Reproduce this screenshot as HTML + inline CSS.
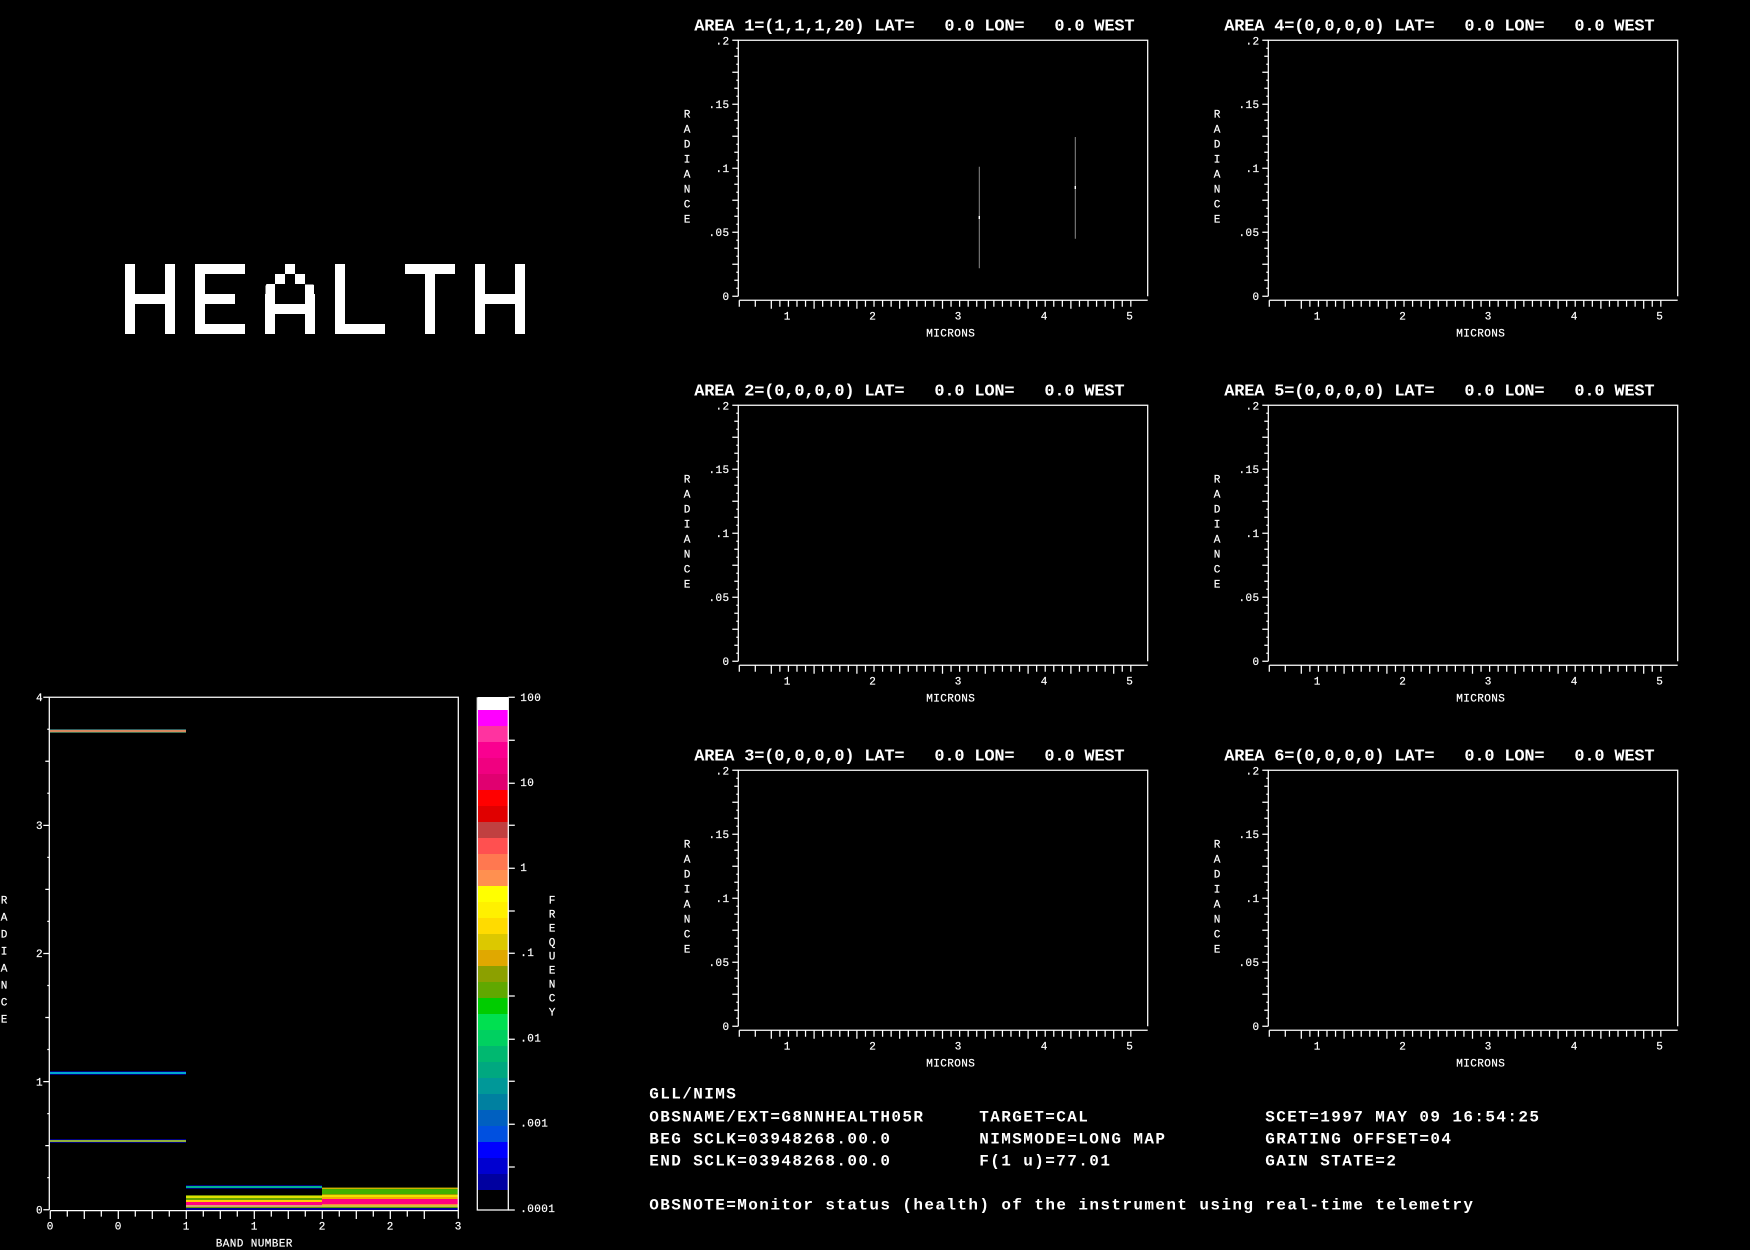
<!DOCTYPE html>
<html lang="en">
<head>
<meta charset="utf-8">
<title>NIMS HEALTH</title>
<style>
html,body{margin:0;padding:0;background:#000;width:1750px;height:1250px;overflow:hidden}
svg{display:block}
text{fill:#fff;font-family:"Liberation Mono",monospace;white-space:pre}
.t{font-size:17px;font-weight:bold;letter-spacing:-.2px}
.b{font-size:16px;font-weight:bold;letter-spacing:1.4px}
.s{font-size:11px;letter-spacing:.4px;stroke:#fff;stroke-width:.2px}
.e{text-anchor:end}
.m{text-anchor:middle}
.big{font-family:"Liberation Sans",sans-serif;font-size:100px}
.l{stroke:#fff;stroke-width:1.25;fill:none}
</style>
</head>
<body>
<svg xmlns="http://www.w3.org/2000/svg" width="1750" height="1250" viewBox="0 0 1750 1250">
<defs>
<g id="pf">
<path class="l" d="M738.3 296.3V40.3H1147.7V296.3"/>
<path class="l" transform="translate(738.3 40.3)" d="M0 0h-6m6 8h-2m2 8h-4m4 8h-2m2 8h-6m6 8h-2m2 8h-4m4 8h-2m2 8h-6m6 8h-2m2 8h-4m4 8h-2m2 8h-6m6 8h-2m2 8h-4m4 8h-2m2 8h-6m6 8h-2m2 8h-4m4 8h-2m2 8h-6m6 8h-2m2 8h-4m4 8h-2m2 8h-6m6 8h-2m2 8h-4m4 8h-2m2 8h-6m6 8h-2m2 8h-4m4 8h-2m2 8h-6"/>
<path class="l" transform="translate(738.3 40.3)" d="M1 260H409.4M1 260v6.5m16-6.5v6.5m16-6.5v8.5m8.56-8.5v6.5m8.56-6.5v6.5m8.56-6.5v6.5m8.56-6.5v6.5m8.56-6.5v8.5m8.56-8.5v6.5m8.56-6.5v6.5m8.56-6.5v6.5m8.56-6.5v6.5m8.56-6.5v8.5m8.56-8.5v6.5m8.56-6.5v6.5m8.56-6.5v6.5m8.56-6.5v6.5m8.56-6.5v8.5m8.56-8.5v6.5m8.56-6.5v6.5m8.56-6.5v6.5m8.56-6.5v6.5m8.56-6.5v8.5m8.56-8.5v6.5m8.56-6.5v6.5m8.56-6.5v6.5m8.56-6.5v6.5m8.56-6.5v8.5m8.56-8.5v6.5m8.56-6.5v6.5m8.56-6.5v6.5m8.56-6.5v6.5m8.56-6.5v8.5m8.56-8.5v6.5m8.56-6.5v6.5m8.56-6.5v6.5m8.56-6.5v6.5m8.56-6.5v8.5m8.56-8.5v6.5m8.56-6.5v6.5m8.56-6.5v6.5m8.56-6.5v6.5m8.56-6.5v8.5m8.56-8.5v6.5m8.56-6.5v6.5"/>
</g>
<filter id="pix" filterUnits="userSpaceOnUse" x="125" y="264" width="400" height="70" color-interpolation-filters="sRGB">
<feFlood x="129" y="268" width="2" height="2" flood-color="#fff"/>
<feComposite x="125" y="264" width="10" height="10"/>
<feTile x="125" y="264" width="400" height="70" result="grid"/>
<feComposite in="SourceGraphic" in2="grid" operator="in"/>
<feComponentTransfer><feFuncA type="discrete" tableValues="0 1"/></feComponentTransfer>
<feMorphology operator="dilate" radius="4"/>
</filter>
<clipPath id="atop">
<rect x="285" y="264" width="10" height="10"/>
<rect x="275" y="274" width="10" height="10"/><rect x="295" y="274" width="10" height="10"/>
<rect x="265" y="284" width="10" height="10"/><rect x="305" y="284" width="10" height="10"/>
</clipPath>
<clipPath id="abot">
<rect x="265" y="294" width="10" height="40"/><rect x="305" y="294" width="10" height="40"/>
<rect x="265" y="304" width="50" height="10"/>
</clipPath>
</defs>

<rect width="1750" height="1250" fill="#000"/>

<!-- HEALTH -->
<g filter="url(#pix)">
<text class="big" transform="translate(118.96 334) scale(.8595 1.0175)">H</text>
<text class="big" transform="translate(188.85 334) scale(.868 1.0175)">E</text>
<g clip-path="url(#atop)"><text class="big" transform="translate(255.65 311.9) scale(1.024 .682)">A</text></g>
<g clip-path="url(#abot)"><text class="big" transform="translate(255.65 357.6) scale(1.024 2.048)">A</text></g>
<text class="big" transform="translate(325.27 334) scale(1.147 1.0175)">L</text>
<text class="big" transform="translate(405 334) scale(.819 1.0175)">T</text>
<text class="big" transform="translate(468.96 334) scale(.8595 1.0175)">H</text>
</g>

<!-- Panel 1 -->
<g>
<text class="t" x="694.3" y="30.5">AREA 1=(1,1,1,20) LAT=   0.0 LON=   0.0 WEST</text>
<use href="#pf"/>
<text class="s e" x="729.5" y="44.3">.2</text><text class="s e" x="729.5" y="108">.15</text><text class="s e" x="729.5" y="172.2">.1</text><text class="s e" x="729.5" y="236">.05</text><text class="s e" x="729.5" y="300">0</text>
<text class="s m" x="787.3" y="319.5">1</text><text class="s m" x="872.7" y="319.5">2</text><text class="s m" x="958.3" y="319.5">3</text><text class="s m" x="1044.3" y="319.5">4</text><text class="s m" x="1129.7" y="319.5">5</text>
<text class="s m" x="950.7" y="336.5">MICRONS</text>
<text class="s m" x="687.3" y="117.3">R</text><text class="s m" x="687.3" y="132.3">A</text><text class="s m" x="687.3" y="147.3">D</text><text class="s m" x="687.3" y="162.3">I</text><text class="s m" x="687.3" y="177.3">A</text><text class="s m" x="687.3" y="192.3">N</text><text class="s m" x="687.3" y="207.3">C</text><text class="s m" x="687.3" y="222.3">E</text>
<path d="M979.3 166.7V268.3M1075.3 137V238.7" stroke="#8a8a8a" stroke-width="1" fill="none"/>
<path d="M979.3 216V219M1075.3 186V189" stroke="#fff" stroke-width="1.4" fill="none"/>
</g>

<!-- Panel 2 -->
<g transform="translate(0 365)">
<text class="t" x="694.3" y="30.5">AREA 2=(0,0,0,0) LAT=   0.0 LON=   0.0 WEST</text>
<use href="#pf"/>
<text class="s e" x="729.5" y="44.3">.2</text><text class="s e" x="729.5" y="108">.15</text><text class="s e" x="729.5" y="172.2">.1</text><text class="s e" x="729.5" y="236">.05</text><text class="s e" x="729.5" y="300">0</text>
<text class="s m" x="787.3" y="319.5">1</text><text class="s m" x="872.7" y="319.5">2</text><text class="s m" x="958.3" y="319.5">3</text><text class="s m" x="1044.3" y="319.5">4</text><text class="s m" x="1129.7" y="319.5">5</text>
<text class="s m" x="950.7" y="336.5">MICRONS</text>
<text class="s m" x="687.3" y="117.3">R</text><text class="s m" x="687.3" y="132.3">A</text><text class="s m" x="687.3" y="147.3">D</text><text class="s m" x="687.3" y="162.3">I</text><text class="s m" x="687.3" y="177.3">A</text><text class="s m" x="687.3" y="192.3">N</text><text class="s m" x="687.3" y="207.3">C</text><text class="s m" x="687.3" y="222.3">E</text>
</g>

<!-- Panel 3 -->
<g transform="translate(0 730)">
<text class="t" x="694.3" y="30.5">AREA 3=(0,0,0,0) LAT=   0.0 LON=   0.0 WEST</text>
<use href="#pf"/>
<text class="s e" x="729.5" y="44.3">.2</text><text class="s e" x="729.5" y="108">.15</text><text class="s e" x="729.5" y="172.2">.1</text><text class="s e" x="729.5" y="236">.05</text><text class="s e" x="729.5" y="300">0</text>
<text class="s m" x="787.3" y="319.5">1</text><text class="s m" x="872.7" y="319.5">2</text><text class="s m" x="958.3" y="319.5">3</text><text class="s m" x="1044.3" y="319.5">4</text><text class="s m" x="1129.7" y="319.5">5</text>
<text class="s m" x="950.7" y="336.5">MICRONS</text>
<text class="s m" x="687.3" y="117.3">R</text><text class="s m" x="687.3" y="132.3">A</text><text class="s m" x="687.3" y="147.3">D</text><text class="s m" x="687.3" y="162.3">I</text><text class="s m" x="687.3" y="177.3">A</text><text class="s m" x="687.3" y="192.3">N</text><text class="s m" x="687.3" y="207.3">C</text><text class="s m" x="687.3" y="222.3">E</text>
</g>

<!-- Panel 4 -->
<g transform="translate(530 0)">
<text class="t" x="694.3" y="30.5">AREA 4=(0,0,0,0) LAT=   0.0 LON=   0.0 WEST</text>
<use href="#pf"/>
<text class="s e" x="729.5" y="44.3">.2</text><text class="s e" x="729.5" y="108">.15</text><text class="s e" x="729.5" y="172.2">.1</text><text class="s e" x="729.5" y="236">.05</text><text class="s e" x="729.5" y="300">0</text>
<text class="s m" x="787.3" y="319.5">1</text><text class="s m" x="872.7" y="319.5">2</text><text class="s m" x="958.3" y="319.5">3</text><text class="s m" x="1044.3" y="319.5">4</text><text class="s m" x="1129.7" y="319.5">5</text>
<text class="s m" x="950.7" y="336.5">MICRONS</text>
<text class="s m" x="687.3" y="117.3">R</text><text class="s m" x="687.3" y="132.3">A</text><text class="s m" x="687.3" y="147.3">D</text><text class="s m" x="687.3" y="162.3">I</text><text class="s m" x="687.3" y="177.3">A</text><text class="s m" x="687.3" y="192.3">N</text><text class="s m" x="687.3" y="207.3">C</text><text class="s m" x="687.3" y="222.3">E</text>
</g>

<!-- Panel 5 -->
<g transform="translate(530 365)">
<text class="t" x="694.3" y="30.5">AREA 5=(0,0,0,0) LAT=   0.0 LON=   0.0 WEST</text>
<use href="#pf"/>
<text class="s e" x="729.5" y="44.3">.2</text><text class="s e" x="729.5" y="108">.15</text><text class="s e" x="729.5" y="172.2">.1</text><text class="s e" x="729.5" y="236">.05</text><text class="s e" x="729.5" y="300">0</text>
<text class="s m" x="787.3" y="319.5">1</text><text class="s m" x="872.7" y="319.5">2</text><text class="s m" x="958.3" y="319.5">3</text><text class="s m" x="1044.3" y="319.5">4</text><text class="s m" x="1129.7" y="319.5">5</text>
<text class="s m" x="950.7" y="336.5">MICRONS</text>
<text class="s m" x="687.3" y="117.3">R</text><text class="s m" x="687.3" y="132.3">A</text><text class="s m" x="687.3" y="147.3">D</text><text class="s m" x="687.3" y="162.3">I</text><text class="s m" x="687.3" y="177.3">A</text><text class="s m" x="687.3" y="192.3">N</text><text class="s m" x="687.3" y="207.3">C</text><text class="s m" x="687.3" y="222.3">E</text>
</g>

<!-- Panel 6 -->
<g transform="translate(530 730)">
<text class="t" x="694.3" y="30.5">AREA 6=(0,0,0,0) LAT=   0.0 LON=   0.0 WEST</text>
<use href="#pf"/>
<text class="s e" x="729.5" y="44.3">.2</text><text class="s e" x="729.5" y="108">.15</text><text class="s e" x="729.5" y="172.2">.1</text><text class="s e" x="729.5" y="236">.05</text><text class="s e" x="729.5" y="300">0</text>
<text class="s m" x="787.3" y="319.5">1</text><text class="s m" x="872.7" y="319.5">2</text><text class="s m" x="958.3" y="319.5">3</text><text class="s m" x="1044.3" y="319.5">4</text><text class="s m" x="1129.7" y="319.5">5</text>
<text class="s m" x="950.7" y="336.5">MICRONS</text>
<text class="s m" x="687.3" y="117.3">R</text><text class="s m" x="687.3" y="132.3">A</text><text class="s m" x="687.3" y="147.3">D</text><text class="s m" x="687.3" y="162.3">I</text><text class="s m" x="687.3" y="177.3">A</text><text class="s m" x="687.3" y="192.3">N</text><text class="s m" x="687.3" y="207.3">C</text><text class="s m" x="687.3" y="222.3">E</text>
</g>

<!-- Left 2D histogram: coloured strips -->
<g shape-rendering="crispEdges">
<rect x="50" y="729" width="136" height="1" fill="#306060"/>
<rect x="50" y="730" width="136" height="2" fill="#d88a60"/>
<rect x="50" y="732" width="136" height="1" fill="#407050"/>
<rect x="50" y="1071" width="136" height="4" fill="#000080"/>
<rect x="50" y="1072" width="136" height="2" fill="#00a8d0"/>
<rect x="50" y="1139" width="136" height="4" fill="#000080"/>
<rect x="50" y="1140" width="136" height="2" fill="#90b040"/>
<rect x="186" y="1185" width="136" height="4" fill="#000080"/>
<rect x="186" y="1186" width="136" height="2" fill="#00b090"/>
<rect x="186" y="1195" width="136" height="1" fill="#6a8a00"/>
<rect x="186" y="1196" width="136" height="2" fill="#e0e000"/>
<rect x="186" y="1198" width="136" height="2" fill="#60a000"/>
<rect x="186" y="1200" width="136" height="2" fill="#ffd000"/>
<rect x="186" y="1202" width="136" height="3" fill="#ff0080"/>
<rect x="186" y="1205" width="136" height="2" fill="#d8a070"/>
<rect x="186" y="1207" width="136" height="1" fill="#60a000"/>
<rect x="186" y="1208" width="136" height="2" fill="#000090"/>
<rect x="322" y="1187" width="136" height="1" fill="#505000"/>
<rect x="322" y="1188" width="136" height="1" fill="#d0b000"/>
<rect x="322" y="1189" width="136" height="5" fill="#40b000"/>
<rect x="322" y="1194" width="136" height="1" fill="#a0a000"/>
<rect x="322" y="1195" width="136" height="2" fill="#f0e000"/>
<rect x="322" y="1197" width="136" height="2" fill="#f0b000"/>
<rect x="322" y="1199" width="136" height="5" fill="#ff0080"/>
<rect x="322" y="1204" width="136" height="1" fill="#ff8040"/>
<rect x="322" y="1205" width="136" height="2" fill="#d0c040"/>
<rect x="322" y="1207" width="136" height="1" fill="#50a000"/>
<rect x="322" y="1208" width="136" height="2" fill="#000090"/>
</g>

<!-- Left plot axes -->
<path class="l" d="M49.3 1209.7V697.3H458.3V1218.7"/>
<path class="l" transform="translate(49.3 697.3)" d="M0 0h-6m6 32h-2m2 32h-4m4 32h-2m2 32.1h-6m6 32h-2m2 32h-4m4 32h-2m2 32.1h-6m6 32h-2m2 32h-4m4 32h-2m2 32.1h-6m6 32h-2m2 32h-4m4 32h-2m2 32.1h-6"/>
<path class="l" transform="translate(50.3 1210.6)" d="M0 0H408M0 0v8.4m17-8.4v6m17-6v8.4m17-8.4v6m17-6v8.4m17-8.4v6m17-6v8.4m17-8.4v6m17-6v8.4m17-8.4v6m17-6v8.4m17-8.4v6m17-6v8.4m17-8.4v6m17-6v8.4m17-8.4v6m17-6v8.4m17-8.4v6m17-6v8.4m17-8.4v6m17-6v8.4m17-8.4v6m17-6v8.4"/>
<text class="s e" x="43" y="701">4</text><text class="s e" x="43" y="829">3</text><text class="s e" x="43" y="957">2</text><text class="s e" x="43" y="1085.3">1</text><text class="s e" x="43" y="1213.3">0</text>
<text class="s m" x="50.3" y="1229.5">0</text><text class="s m" x="118.3" y="1229.5">0</text><text class="s m" x="186.3" y="1229.5">1</text><text class="s m" x="254.3" y="1229.5">1</text><text class="s m" x="322.3" y="1229.5">2</text><text class="s m" x="390.3" y="1229.5">2</text><text class="s m" x="458.3" y="1229.5">3</text>
<text class="s m" x="254.3" y="1246.5">BAND NUMBER</text>
<text class="s m" x="4.3" y="903.3">R</text><text class="s m" x="4.3" y="920.3">A</text><text class="s m" x="4.3" y="937.3">D</text><text class="s m" x="4.3" y="954.3">I</text><text class="s m" x="4.3" y="971.3">A</text><text class="s m" x="4.3" y="988.3">N</text><text class="s m" x="4.3" y="1005.3">C</text><text class="s m" x="4.3" y="1022.3">E</text>

<!-- Colour bar -->
<g shape-rendering="crispEdges">
<rect x="478" y="697" width="30" height="13" fill="#fff"/>
<rect x="478" y="710" width="30" height="16" fill="#ff00ff"/>
<rect x="478" y="726" width="30" height="16" fill="#ff33a0"/>
<rect x="478" y="742" width="30" height="16" fill="#fa0090"/>
<rect x="478" y="758" width="30" height="16" fill="#f00080"/>
<rect x="478" y="774" width="30" height="16" fill="#e00070"/>
<rect x="478" y="790" width="30" height="16" fill="#ff0000"/>
<rect x="478" y="806" width="30" height="16" fill="#e00000"/>
<rect x="478" y="822" width="30" height="16" fill="#c04040"/>
<rect x="478" y="838" width="30" height="16" fill="#ff5050"/>
<rect x="478" y="854" width="30" height="16" fill="#ff7850"/>
<rect x="478" y="870" width="30" height="16" fill="#ff9050"/>
<rect x="478" y="886" width="30" height="16" fill="#ffff00"/>
<rect x="478" y="902" width="30" height="16" fill="#fff000"/>
<rect x="478" y="918" width="30" height="16" fill="#ffdb00"/>
<rect x="478" y="934" width="30" height="16" fill="#dcc800"/>
<rect x="478" y="950" width="30" height="16" fill="#e0a800"/>
<rect x="478" y="966" width="30" height="16" fill="#8ca000"/>
<rect x="478" y="982" width="30" height="16" fill="#60a800"/>
<rect x="478" y="998" width="30" height="16" fill="#00cc00"/>
<rect x="478" y="1014" width="30" height="16" fill="#00e050"/>
<rect x="478" y="1030" width="30" height="16" fill="#00d060"/>
<rect x="478" y="1046" width="30" height="16" fill="#00b870"/>
<rect x="478" y="1062" width="30" height="16" fill="#00a880"/>
<rect x="478" y="1078" width="30" height="16" fill="#009898"/>
<rect x="478" y="1094" width="30" height="16" fill="#0080a0"/>
<rect x="478" y="1110" width="30" height="16" fill="#0060c0"/>
<rect x="478" y="1126" width="30" height="16" fill="#0050e0"/>
<rect x="478" y="1142" width="30" height="16" fill="#0000ff"/>
<rect x="478" y="1158" width="30" height="16" fill="#0000d0"/>
<rect x="478" y="1174" width="30" height="16" fill="#0000a0"/>
</g>
<path class="l" d="M477.3 697.3V1210H508.3V697.3"/>
<path class="l" d="M508.3 697.3h6.5M508.3 740.3h6.5M508.3 783.3h6.5M508.3 825.3h6.5M508.3 868.3h6.5M508.3 911h6.5M508.3 953.3h6.5M508.3 996h6.5M508.3 1039.3h6.5M508.3 1081.3h6.5M508.3 1124.3h6.5M508.3 1167h6.5M508.3 1210h6.5"/>
<text class="s" x="520.3" y="701">100</text><text class="s" x="520.3" y="786">10</text><text class="s" x="520.3" y="871">1</text><text class="s" x="520.3" y="956">.1</text><text class="s" x="520.3" y="1041.6">.01</text><text class="s" x="520.3" y="1126.4">.001</text><text class="s" x="520.3" y="1212">.0001</text>
<text class="s m" x="552.3" y="903.3">F</text><text class="s m" x="552.3" y="917.3">R</text><text class="s m" x="552.3" y="931.3">E</text><text class="s m" x="552.3" y="945.3">Q</text><text class="s m" x="552.3" y="959.3">U</text><text class="s m" x="552.3" y="973.3">E</text><text class="s m" x="552.3" y="987.3">N</text><text class="s m" x="552.3" y="1001.3">C</text><text class="s m" x="552.3" y="1015.3">Y</text>

<!-- Bottom info -->
<text class="b" x="649.3" y="1098.5">GLL/NIMS</text>
<text class="b" x="649.3" y="1121.3">OBSNAME/EXT=G8NNHEALTH05R</text>
<text class="b" x="979.3" y="1121.3">TARGET=CAL</text>
<text class="b" x="1265.3" y="1121.3">SCET=1997 MAY 09 16:54:25</text>
<text class="b" x="649.3" y="1143.3">BEG SCLK=03948268.00.0</text>
<text class="b" x="979.3" y="1143.3">NIMSMODE=LONG MAP</text>
<text class="b" x="1265.3" y="1143.3">GRATING OFFSET=04</text>
<text class="b" x="649.3" y="1165.3">END SCLK=03948268.00.0</text>
<text class="b" x="979.3" y="1165.3">F(1 u)=77.01</text>
<text class="b" x="1265.3" y="1165.3">GAIN STATE=2</text>
<text class="b" x="649.3" y="1209.3">OBSNOTE=Monitor status (health) of the instrument using real-time telemetry</text>
</svg>
</body>
</html>
